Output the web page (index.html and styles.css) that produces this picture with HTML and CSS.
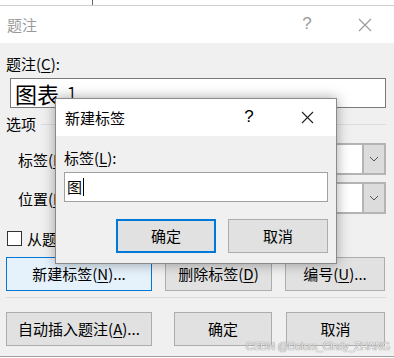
FILE: index.html
```html
<!DOCTYPE html>
<html lang="zh-CN">
<head>
    <meta charset="UTF-8">
    <meta name="viewport" content="width=device-width, initial-scale=1.0">
    <title>题注</title>
    <link rel="stylesheet" href="styles.css">
</head>
<body>

    <div class="doc-strip"><div class="rule"></div></div>

    <div class="dialog">
        <div class="titlebar">
            <span class="title">题注</span>
            <span class="cap-btn help">?</span>
            <span class="cap-btn">
                <svg width="14" height="14" viewBox="0 0 14 14"><path d="M1 1L13 13M13 1L1 13" stroke="#999" stroke-width="1.1" fill="none"/></svg>
            </span>
        </div>

        <div class="content">
            <div class="field-label">题注(<u>C</u>):</div>
            <div class="caption-input">图表<span class="num">1</span></div>

            <div class="group-title"><span>选项</span><div class="line"></div></div>

            <div class="combo-row">
                <span class="combo-label">标签(<u>L</u>):</span>
                <div class="combo"><span class="combo-text"></span><span class="drop"><svg width="10" height="6" viewBox="0 0 10 6"><path d="M1 1L5 5L9 1" stroke="#555" fill="none"/></svg></span></div>
            </div>
            <div class="combo-row second">
                <span class="combo-label">位置(<u>P</u>):</span>
                <div class="combo"><span class="combo-text"></span><span class="drop"><svg width="10" height="6" viewBox="0 0 10 6"><path d="M1 1L5 5L9 1" stroke="#555" fill="none"/></svg></span></div>
            </div>

            <div class="check-row">
                <span class="checkbox"></span>
                <span>从题注中排除标签(<u>E</u>)</span>
            </div>

            <div class="btn-row first">
                <button class="btn active w146">新建标签(<u>N</u>)...</button>
                <button class="btn w107 gap13">删除标签(<u>D</u>)</button>
                <button class="btn w100 gap13">编号(<u>U</u>)...</button>
            </div>

            <div class="separator"></div>

            <div class="btn-row">
                <button class="btn w146">自动插入题注(<u>A</u>)...</button>
                <button class="btn w98 gap22">确定</button>
                <button class="btn w99 gap14">取消</button>
            </div>
        </div>
    </div>

    <div class="modal">
        <div class="titlebar small">
            <span class="title dark">新建标签</span>
            <span class="cap-btn help dark">?</span>
            <span class="cap-btn">
                <svg width="13" height="13" viewBox="0 0 13 13"><path d="M1 1L12 12M12 1L1 12" stroke="#222" stroke-width="1.1" fill="none"/></svg>
            </span>
        </div>
        <div class="modal-body">
            <div class="field-label">标签(<u>L</u>):</div>
            <div class="label-input">图<span class="caret"></span></div>
            <div class="modal-buttons">
                <button class="btn default">确定</button>
                <button class="btn">取消</button>
            </div>
        </div>
    </div>

    <div class="watermark">CSDN @Dolors_Cindy_ZHANG</div>

</body>
</html>
```

FILE: styles.css
```css
* {
    box-sizing: border-box;
}

body {
    margin: 0;
    width: 394px;
    height: 358px;
    overflow: hidden;
    position: relative;
    background: #fff;
    font-family: "Noto Sans CJK SC", "Noto Sans", sans-serif;
    font-size: 15px;
    color: #000;
}

u {
    text-decoration-thickness: 1px;
    text-underline-offset: 2px;
}

.doc-strip {
    height: 6px;
    border-bottom: 1px solid #cfcfcf;
}

.doc-strip .rule {
    margin-left: 92px;
    width: 1px;
    height: 5px;
    background: #666;
}

.dialog {
    background: #f0f0f0;
    border-bottom: 1px solid #a0a0a0;
}

.titlebar {
    height: 37px;
    background: #fff;
    display: flex;
    align-items: center;
    padding-left: 7px;
}

.titlebar .title {
    flex: 1;
    color: #9a9a9a;
    line-height: 20px;
}

.cap-btn {
    width: 58px;
    height: 37px;
    display: flex;
    align-items: center;
    justify-content: center;
}

.cap-btn.help {
    color: #9a9a9a;
    font-family: "Liberation Sans", sans-serif;
    font-size: 17px;
    padding-bottom: 1px;
}

.titlebar .dark,
.cap-btn.dark {
    color: #000;
}

.content {
    padding: 11px 8px 10px 6px;
}

.field-label {
    line-height: 20px;
}

.caption-input {
    margin: 4px 0 0 4px;
    height: 30px;
    background: #fff;
    border: 1px solid #7a7a7a;
    padding-left: 4px;
    font-size: 22px;
    line-height: 28px;
}

.caption-input .num {
    margin-left: 7px;
    font-weight: 300;
}

.group-title {
    display: flex;
    align-items: center;
    margin-top: 6px;
    line-height: 20px;
}

.group-title .line {
    flex: 1;
    height: 1px;
    background: #dcdcdc;
    margin-left: 5px;
}

.combo-row {
    display: flex;
    align-items: center;
    margin-top: 9px;
    padding-left: 12px;
}

.combo-row.second {
    margin-top: 7px;
}

.combo-label {
    width: 62px;
}

.combo {
    flex: 1;
    height: 32px;
    display: flex;
    background: #fff;
    border: 2px solid #b4b4b4;
}

.combo-text {
    flex: 1;
}

.drop {
    width: 22px;
    background: #dcdcdc;
    border-left: 2px solid #b4b4b4;
    display: flex;
    align-items: center;
    justify-content: center;
}

.check-row {
    display: flex;
    align-items: center;
    margin-top: 17px;
    height: 15px;
    padding-left: 1px;
}

.checkbox {
    width: 15px;
    height: 15px;
    border: 1px solid #333;
    background: #fff;
    margin-right: 5px;
}

.btn-row {
    display: flex;
    margin-top: 14px;
}

.btn-row.first {
    margin-top: 11px;
}

.btn {
    height: 34px;
    background: #e1e1e1;
    border: 1px solid #adadad;
    font-family: inherit;
    font-size: 15px;
    color: #000;
    padding: 0;
    line-height: 20px;
}

.btn.active {
    background: #e5f1fb;
    border-color: #0078d7;
}

.w146 { width: 146px; }
.w107 { width: 107px; }
.w100 { width: 100px; }
.w98 { width: 98px; }
.w99 { width: 99px; }
.gap13 { margin-left: 13px; }
.gap14 { margin-left: 14px; }
.gap22 { margin-left: 22px; }

.separator {
    height: 1px;
    background: #dcdcdc;
    margin-top: 6px;
}

/* new label dialog, floating over the caption dialog */
.modal {
    position: absolute;
    left: 55px;
    top: 98px;
    width: 282px;
    height: 166px;
    border: 1px solid #8a8a8a;
    background: #f0f0f0;
    box-shadow: 0 0 12px rgba(0, 0, 0, 0.35);
}

.titlebar.small {
    padding-left: 9px;
}

.modal-body {
    padding: 12px 8px 0 8px;
}

.label-input {
    margin-top: 4px;
    height: 30px;
    background: #fff;
    border: 1px solid #a0a0a0;
    padding-left: 2px;
    line-height: 28px;
    display: flex;
    align-items: center;
}

.caret {
    width: 1px;
    height: 18px;
    background: #000;
    margin-left: 1px;
}

.modal-buttons {
    display: flex;
    justify-content: flex-end;
    gap: 12px;
    margin-top: 17px;
}

.modal-buttons .btn {
    width: 100px;
}

.btn.default {
    border: 2px solid #0078d7;
}

.watermark {
    position: absolute;
    right: 4px;
    bottom: 6px;
    font-family: "Liberation Sans", sans-serif;
    font-size: 10.5px;
    color: rgba(255, 255, 255, 0.85);
    text-shadow: 0 0 1px #8a8a8a, 0 0 1px #8a8a8a;
    letter-spacing: -0.2px;
}
```
